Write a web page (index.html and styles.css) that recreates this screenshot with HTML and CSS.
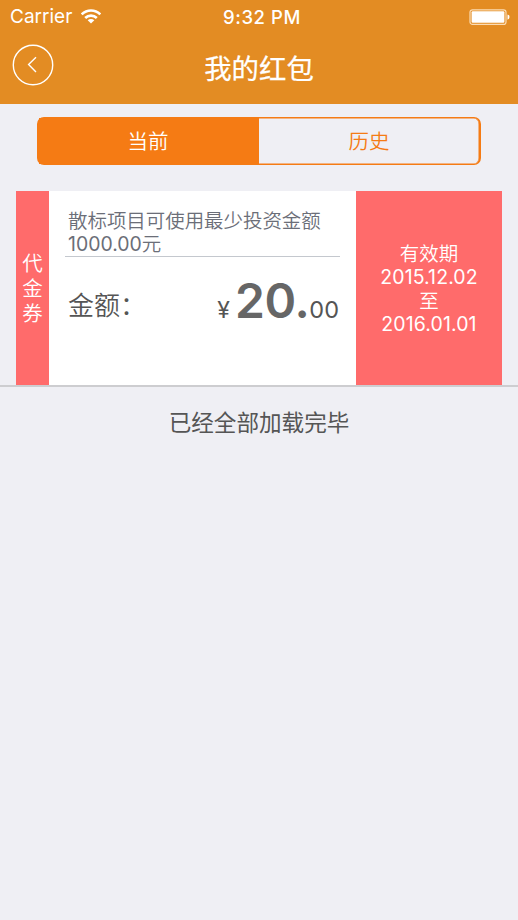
FILE: index.html
```html
<!DOCTYPE html>
<html lang="zh-CN">
<head>
<meta charset="utf-8">
<title>我的红包</title>
<link rel="stylesheet" href="styles.css">
</head>
<body>
<header class="header">
  <div class="status">
    <div class="carrier"><span>Carrier</span>
      <svg class="wifi" width="20" height="15" viewBox="0 0 20 15" fill="none" stroke="#fff" stroke-width="2.6">
        <path d="M.7 5.4a13 13 0 0 1 18.6 0"/><path d="M4.2 9a8.2 8.2 0 0 1 11.6 0"/><path d="M10 14.6 6.7 11.3a4.7 4.7 0 0 1 6.6 0z" fill="#fff" stroke="none"/>
      </svg>
    </div>
    <div class="time">9:32 PM</div>
    <svg class="battery" width="42" height="16" viewBox="0 0 42 16">
      <rect x="1" y=".8" width="36" height="14.6" rx="2.5" fill="none" stroke="#fbdcb4" stroke-width="1.2"/>
      <rect x="2.6" y="2.3" width="32.8" height="11.4" rx="1" fill="#fff"/>
      <path d="M38.5 5.5q2 .3 2 2.6t-2 2.6z" fill="#fff"/>
    </svg>
  </div>
  <div class="nav">
    <svg class="back" width="42" height="42" viewBox="0 0 42 42" fill="none" stroke="#fff">
      <circle cx="21" cy="21" r="19.7" stroke-width="1.4"/><path d="M24 13.3 16.6 20.5l7.4 7.4" stroke-width="1.4"/>
    </svg>
    <h1 class="title">我的红包</h1>
  </div>
</header>
<main>
  <div class="tabs"><div class="tab active">当前</div><div class="tab">历史</div></div>
  <section class="row">
    <div class="kind">代<br>金<br>券</div>
    <div class="info">
      <p class="desc">散标项目可使用最少投资金额<br><span class="threshold">1000.00</span>元</p>
      <div class="amount">
        <span class="label">金额：</span>
        <span class="price"><span class="yen">¥</span><b class="whole">20.</b><span class="cents">00</span></span>
      </div>
    </div>
    <div class="validity"><p>有效期<br><span class="date">2015.12.02</span><br>至<br><span class="date">2016.01.01</span></p></div>
  </section>
  <p class="done">已经全部加载完毕</p>
</main>
</body>
</html>
```
FILE: styles.css
```css
* { box-sizing: border-box; margin: 0; }
body {
  min-height: 920px;
  background: #efeff4;
  font-family: Inter, "Noto Sans CJK SC", sans-serif;
  font-weight: 350;
}
.header { height: 104px; background: #e38c23; color: #fff; }
.status {
  height: 33px;
  padding: 0 7px 0 10px;
  display: grid;
  grid-template-columns: 1fr auto 1fr;
  align-items: center;
}
.carrier { display: flex; align-items: center; gap: 9px; font-size: 19px; font-weight: 400; }
.time { margin-left: 3px; font-size: 18.5px; font-weight: 550; letter-spacing: .6px; }
.battery { justify-self: end; }
.nav {
  height: 70px;
  padding: 0 12px;
  display: grid;
  grid-template-columns: 42px 1fr 42px;
}
.back { margin-top: 11px; }
.title {
  padding-top: 1px;
  font-size: 27.4px;
  line-height: 70px;
  font-weight: 400;
  text-align: center;
  -webkit-text-stroke: .25px #fff;
}
.tabs {
  display: flex;
  width: 444px;
  height: 48px;
  margin: 0 0 0 37px;
  border: solid #f57b14;
  border-width: 1px 2px;
  border-radius: 7px;
  box-shadow: inset 0 0 0 .5px #f57b14;
}
main { padding-top: 13px; }
.tab { width: 50%; padding-top: 1px; color: #f57b14; font-size: 20.5px; line-height: 45px; text-align: center; }
.active { padding-right: 2px; background: #f57b14; color: #fff; }
.row {
  display: flex;
  height: 196px;
  margin-top: 26px;
  padding: 0 16px;
  border-bottom: 2px solid #cdcdd0;
}
.kind, .validity {
  background: #ff6b6b;
  color: #fff;
  display: flex;
  align-items: center;
  justify-content: center;
  text-align: center;
}
.kind { width: 33px; font-size: 20.5px; line-height: 25px; }
.info { width: 307px; padding: 19px 16px 0; background: #fff; }
.desc {
  height: 47px;
  padding-left: 3px;
  border-bottom: 1px solid #c4c8ce;
  color: #6b6e78;
  font-size: 19.45px;
  line-height: 23px;
  white-space: nowrap;
}
.threshold { font-weight: 400; }
.amount {
  display: flex;
  justify-content: space-between;
  align-items: baseline;
  padding: 14px 1px 0 3px;
  color: #555;
}
.label { font-size: 26px; position: relative; top: -3px; }
.price { display: flex; align-items: baseline; line-height: 60px; }
.yen { font-size: 23px; margin-right: 5px; font-weight: 400; }
.whole { font-size: 48px; font-weight: 600; color: #666; letter-spacing: -.4px; }
.cents { font-size: 23.5px; font-weight: 400; }
.validity { width: 146px; padding-top: 3px; font-size: 19.5px; line-height: 23.5px; }
.date { font-weight: 400; letter-spacing: .1px; }
.done { margin-top: 20px; color: #555; font-size: 22.6px; line-height: 32px; font-weight: 400; text-align: center; }
```
